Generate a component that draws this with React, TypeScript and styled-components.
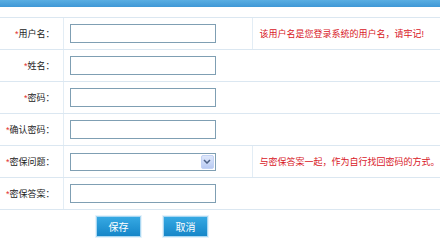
import React from 'react';
import styled, { createGlobalStyle } from 'styled-components';

const GlobalStyle = createGlobalStyle`
  html, body {
    margin: 0;
    padding: 0;
    background: #ffffff;
    font-family: 'Liberation Sans', 'Noto Sans CJK SC', sans-serif;
    font-size: 9px;
  }
`;

interface IField {
  label: string;
  type: 'text' | 'password' | 'select';
  hint?: string;
}

const fields: IField[] = [
  { label: '用户名', type: 'text', hint: '该用户名是您登录系统的用户名，请牢记!' },
  { label: '姓名', type: 'text' },
  { label: '密码', type: 'password' },
  { label: '确认密码', type: 'password' },
  { label: '密保问题', type: 'select', hint: '与密保答案一起，作为自行找回密码的方式。' },
  { label: '密保答案', type: 'text' },
];

function App(): React.ReactElement {
  return (
    <>
      <GlobalStyle />
      <Page>
        <TopBar />
        <FormTable>
          <colgroup>
            <col style={{ width: 63 }} />
            <col style={{ width: 189 }} />
            <col />
          </colgroup>
          <tbody>
            <SpacerRow>
              <td colSpan={3} />
            </SpacerRow>
            {fields.map((f) => (
              <Row key={f.label}>
                <LabelCell>
                  <Star>*</Star>
                  {f.label}：
                </LabelCell>
                <InputCell colSpan={f.hint ? 1 : 2}>
                  {f.type === 'select' ? (
                    <SelectBox>
                      <SelectField defaultValue="">
                        <option value=""></option>
                      </SelectField>
                      <ArrowBox>
                        <svg width="8" height="5" viewBox="0 0 8 5">
                          <path d="M1 1 L4 4 L7 1" fill="none" stroke="#4d6185" strokeWidth="1.5" />
                        </svg>
                      </ArrowBox>
                    </SelectBox>
                  ) : (
                    <TextField type={f.type} />
                  )}
                </InputCell>
                {f.hint && <HintCell>{f.hint}</HintCell>}
              </Row>
            ))}
            <ButtonRow>
              <td />
              <ButtonCell colSpan={2}>
                <BlueButton>保存</BlueButton>
                <BlueButton>取消</BlueButton>
              </ButtonCell>
            </ButtonRow>
          </tbody>
        </FormTable>
      </Page>
    </>
  );
}

export default App;

const Page = styled.div`
  width: 440px;
  height: 239px;
  overflow: hidden;
  background: #ffffff;
`;

const TopBar = styled.div`
  height: 7px;
  background: linear-gradient(#5aaee2, #3f98d6);
`;

const FormTable = styled.table`
  width: 100%;
  border-collapse: collapse;
  table-layout: fixed;
`;

const SpacerRow = styled.tr`
  td {
    height: 10px;
    padding: 0;
    border-bottom: 1px solid #dbe7f1;
  }
`;

const Row = styled.tr`
  td {
    height: 31px;
    padding: 0;
    border-bottom: 1px solid #dbe7f1;
  }
`;

const LabelCell = styled.td`
  text-align: right;
  padding-right: 8px !important;
  color: #222222;
  white-space: nowrap;
  font-size: 9px;
  border-right: 1px solid #e3edf5;
`;

const Star = styled.span`
  color: #e23030;
`;

const InputCell = styled.td`
  padding-left: 6px !important;
`;

const HintCell = styled.td`
  border-left: 1px solid #e3edf5;
  padding-left: 7px !important;
  color: #d8161e;
  white-space: nowrap;
  font-size: 9px;
`;

const TextField = styled.input`
  display: block;
  box-sizing: border-box;
  width: 146px;
  height: 19px;
  margin: 0;
  border: 1px solid #7f9fb3;
  background: #ffffff;
  outline: none;
`;

const SelectBox = styled.div`
  display: flex;
  box-sizing: border-box;
  width: 146px;
  height: 18px;
  border: 1px solid #7f9fb3;
  background: #ffffff;
`;

const SelectField = styled.select`
  flex: 1;
  min-width: 0;
  border: none;
  appearance: none;
  background: transparent;
  outline: none;
`;

const ArrowBox = styled.div`
  display: flex;
  align-items: center;
  justify-content: center;
  width: 13px;
  margin: 1px;
  border-radius: 2px;
  background: linear-gradient(#dfe8fb, #b9cbf3);
  border: 1px solid #c3d3f5;
  box-sizing: border-box;
`;

const ButtonRow = styled.tr`
  td {
    height: 32px;
    padding: 0;
  }
`;

const ButtonCell = styled.td`
  padding-left: 33px !important;
  & > button + button {
    margin-left: 22px;
  }
`;

const BlueButton = styled.button`
  width: 45px;
  height: 21px;
  padding: 0;
  border: 1px solid #a9d7f2;
  outline: 1px solid #e6f3fb;
  background: linear-gradient(#36a9e3, #1686c8);
  color: #ffffff;
  font-family: 'Liberation Sans', 'Noto Sans CJK SC', sans-serif;
  font-size: 10px;
  cursor: pointer;
`;
